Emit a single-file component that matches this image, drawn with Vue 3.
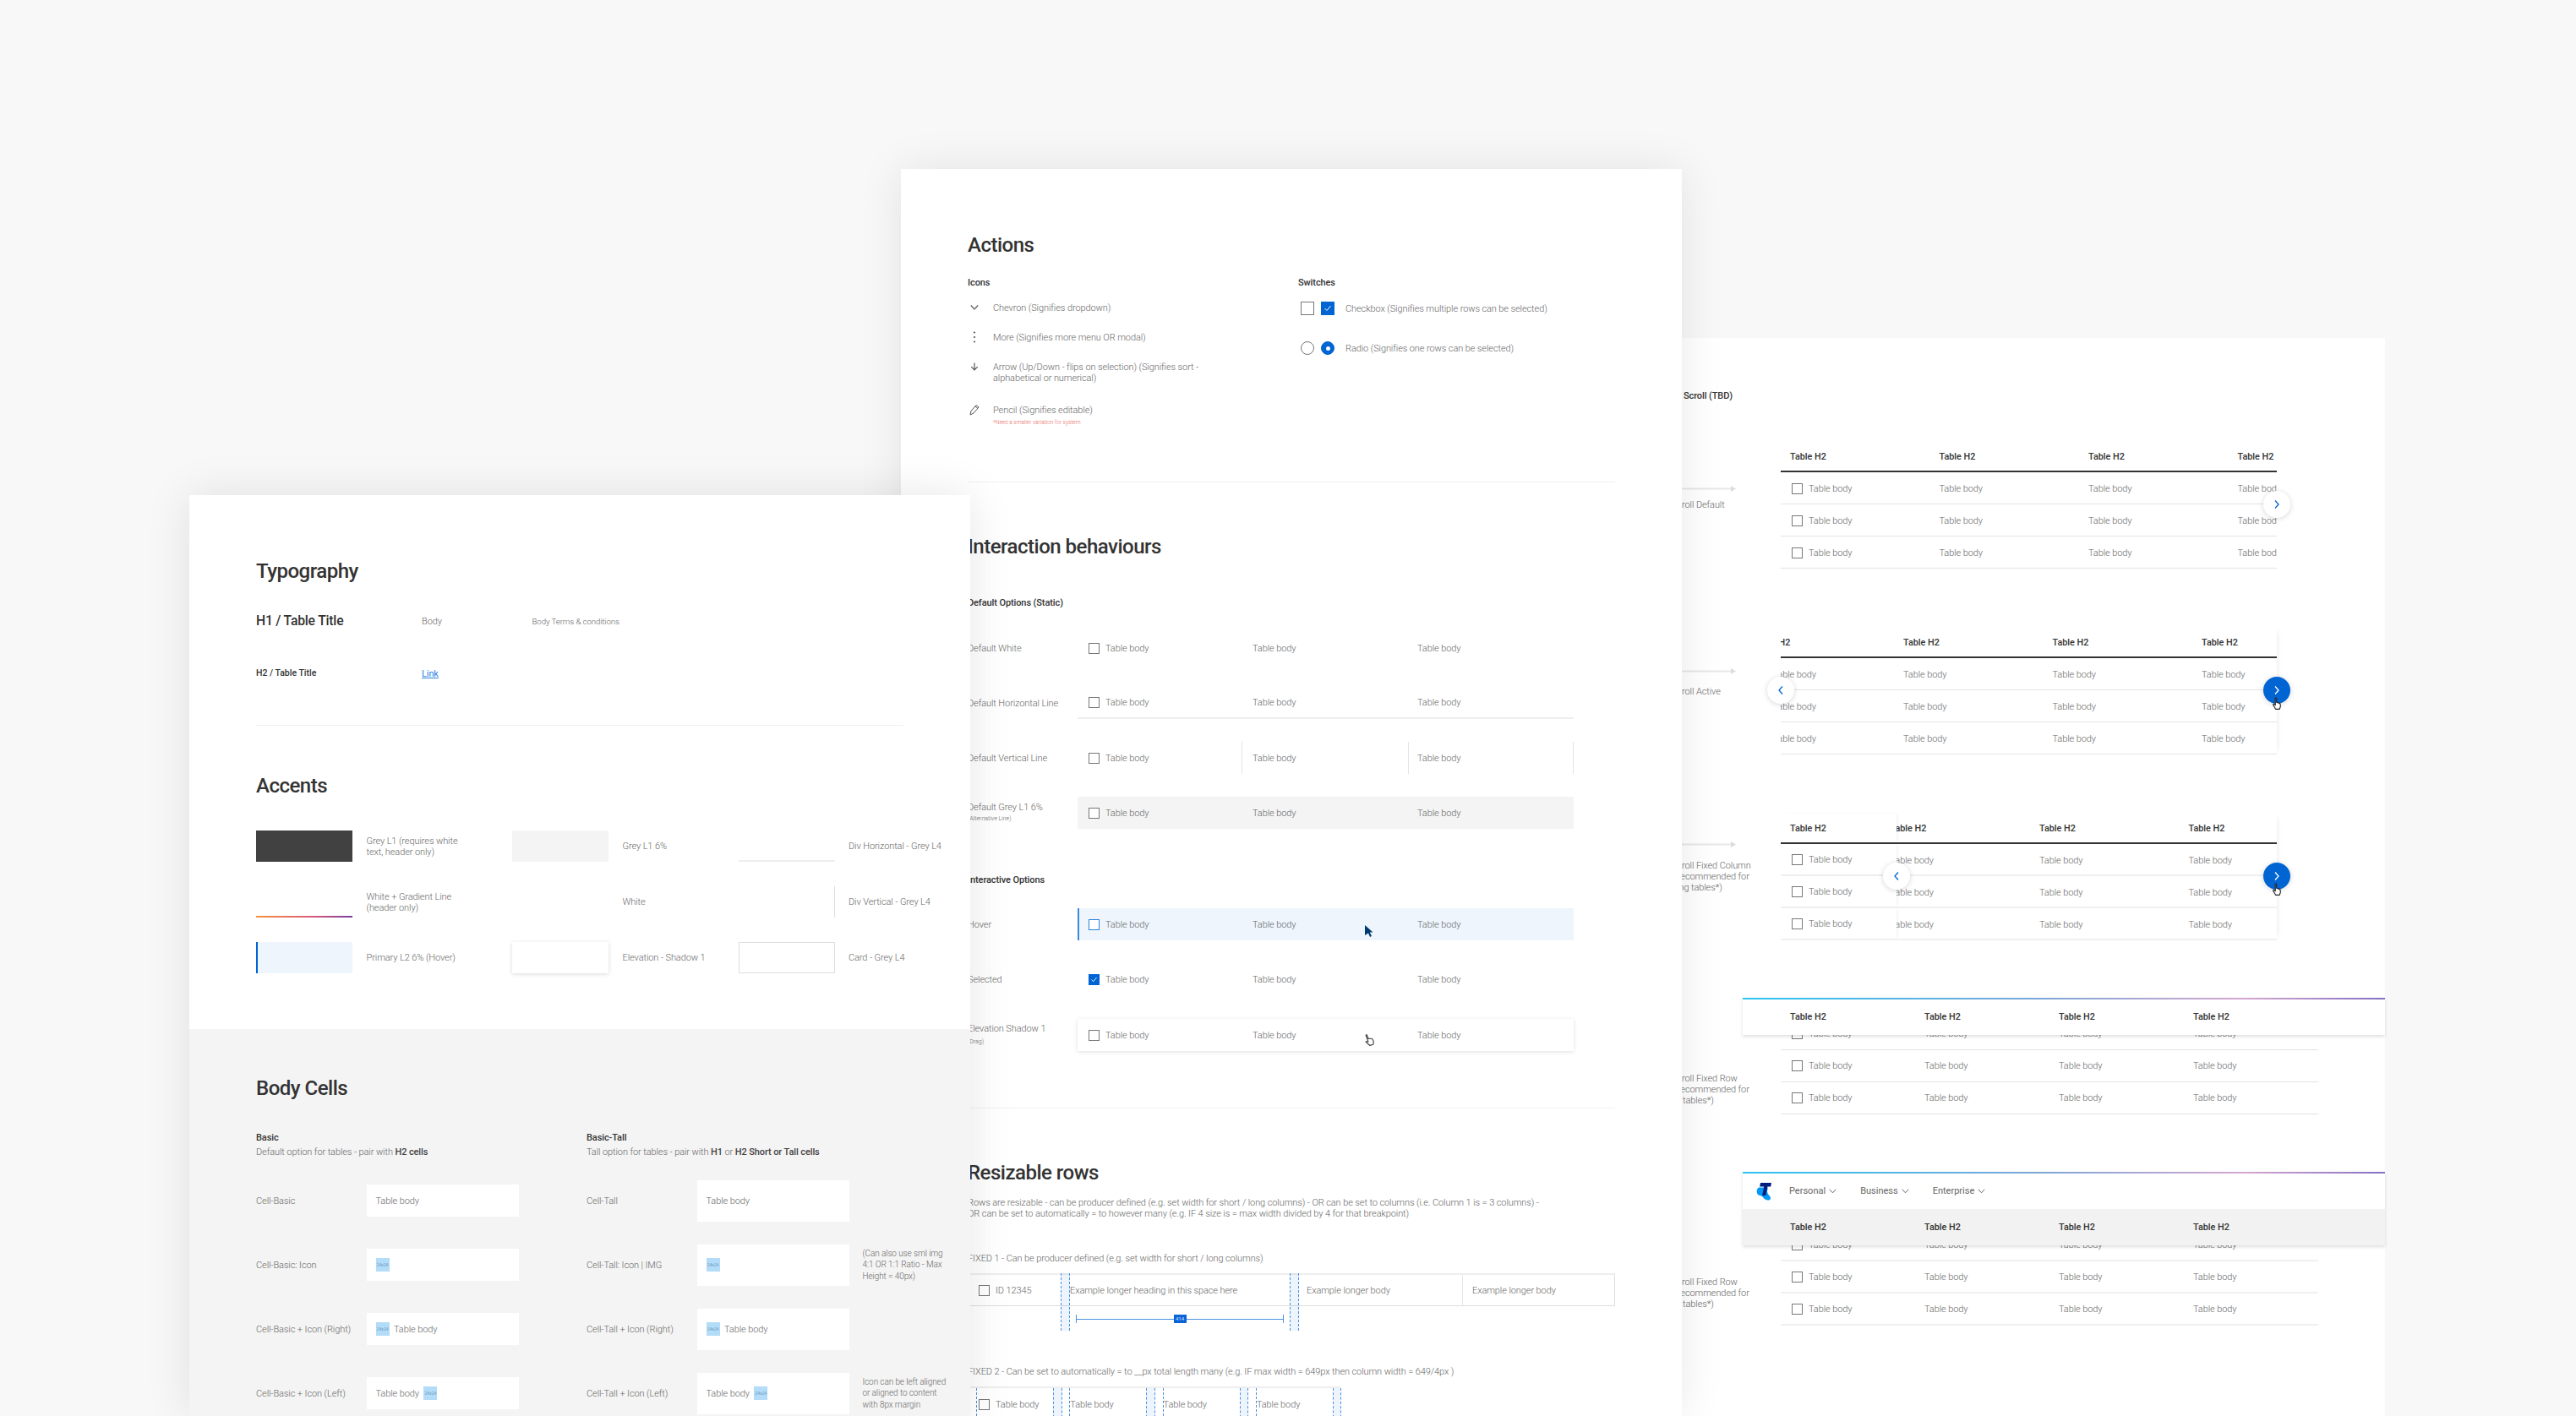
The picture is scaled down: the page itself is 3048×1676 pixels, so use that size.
<script setup>
const iconRows = [
  { icon: 'chevron', lines: ['Chevron (Signifies dropdown)'] },
  { icon: 'more', lines: ['More (Signifies more menu OR modal)'] },
  { icon: 'arrow', lines: ['Arrow (Up/Down - flips on selection) (Signifies sort -', 'alphabetical or numerical)'] },
  { icon: 'pencil', lines: ['Pencil (Signifies editable)'], note: '*Need a smaller variation for system' },
]
const staticRows = [
  { label: 'Default White', cls: '' },
  { label: 'Default Horizontal Line', cls: 'hline' },
  { label: 'Default Vertical Line', cls: 'vline' },
  { label: 'Default Grey L1 6%', sub: '(Alternative Line)', cls: 'grey' },
]
const interactiveRows = [
  { label: 'Hover', cls: 'hover', cursor: 'arrow' },
  { label: 'Selected', cls: 'selected', checked: true },
  { label: 'Elevation Shadow 1', sub: '(Drag)', cls: 'elev', cursor: 'hand' },
]
const swatches = [
  { cls: 'sw-dark', lines: ['Grey L1 (requires white', 'text, header only)'] },
  { cls: 'sw-grey', lines: ['Grey L1 6%'] },
  { cls: 'sw-divh', lines: ['Div Horizontal - Grey L4'] },
  { cls: 'sw-grad', lines: ['White + Gradient Line', '(header only)'] },
  { cls: 'sw-white', lines: ['White'] },
  { cls: 'sw-divv', lines: ['Div Vertical - Grey L4'] },
  { cls: 'sw-hover', lines: ['Primary L2 6% (Hover)'] },
  { cls: 'sw-shadow', lines: ['Elevation - Shadow 1'] },
  { cls: 'sw-card', lines: ['Card - Grey L4'] },
]
const cellRows = [
  { label: 'Cell-Basic', parts: ['text'], tall: false },
  { label: 'Cell-Tall', parts: ['text'], tall: true },
  { label: 'Cell-Basic: Icon', parts: ['chip'], tall: false },
  { label: 'Cell-Tall: Icon | IMG', parts: ['chip'], tall: true, note: ['(Can also use sml img', '4:1 OR 1:1 Ratio - Max', 'Height = 40px)'] },
  { label: 'Cell-Basic + Icon (Right)', parts: ['chip', 'text'], tall: false },
  { label: 'Cell-Tall + Icon (Right)', parts: ['chip', 'text'], tall: true },
  { label: 'Cell-Basic + Icon (Left)', parts: ['text', 'chip'], tall: false },
  { label: 'Cell-Tall + Icon (Left)', parts: ['text', 'chip'], tall: true, note: ['Icon can be left aligned', 'or aligned to content', 'with 8px margin'] },
]
const scrollTables = [
  { id: 't1', label: ['Scroll Default'], cols: 4, firstCheck: true, fixed: false, left: false, active: false },
  { id: 't2', label: ['Scroll Active'], cols: 4, firstCheck: true, fixed: false, left: true, active: true },
  { id: 't3', label: ['Scroll Fixed Column', '(Recommended for', 'long tables*)'], cols: 3, firstCheck: false, fixed: true, left: true, active: true },
]
const fixedBlocks = [
  { id: 'f1', nav: false, thick: false },
  { id: 'f2', nav: true, thick: true },
]
const navItems = ['Personal', 'Business', 'Enterprise']
const autoCols = [0, 1, 2, 3]
</script>

<template>
  <div class="canvas">
    <!-- right board -->
    <section class="board board-c">
      <h4 class="sub-h scroll-title">Scroll (TBD)</h4>
      <div v-for="t in scrollTables" :key="t.id" class="stable-row" :class="t.id">
        <div class="s-label">
          <svg class="flow-arrow" width="76" height="7" viewBox="0 0 76 7"><path d="M0 3.5H70" stroke="#e8e8e8" stroke-width="2" /><path d="M70 0l6 3.500-6 3.500z" fill="#dcdcdc" /></svg>
          <p v-for="l in t.label" :key="l" class="txt">{{ l }}</p>
        </div>
        <div class="stable">
          <div class="srow shead">
            <div v-if="t.fixed" class="fixed-cell"><span class="th">Table H2</span></div>
            <div class="scroller">
              <div class="track">
                <div v-for="c in t.cols" :key="c" class="tcol"><span class="th">Table H2</span></div>
              </div>
            </div>
          </div>
          <div v-for="r in 3" :key="r" class="srow sbody" :class="{ thick: t.fixed }">
            <div v-if="t.fixed" class="fixed-cell check-cell"><i class="cb"></i><span class="txt">Table body</span></div>
            <div class="scroller">
              <div class="track">
                <div v-for="c in t.cols" :key="c" class="tcol" :class="{ 'check-cell': t.firstCheck && c === 1 }">
                  <i v-if="t.firstCheck && c === 1" class="cb"></i><span class="txt">Table body</span>
                </div>
              </div>
            </div>
          </div>
          <span v-if="t.left" class="round round-left">
            <svg width="8" height="12" viewBox="0 0 8 12"><path d="M6 1.500L2 6l4 4.500" fill="none" stroke="#0064d2" stroke-width="1.300" /></svg>
          </span>
          <span class="round round-right" :class="{ active: t.active }">
            <svg width="8" height="12" viewBox="0 0 8 12"><path d="M2 1.500L6 6l-4 4.500" fill="none" :stroke="t.active ? '#fff' : '#0064d2'" stroke-width="1.300" /></svg>
          </span>
          <svg v-if="t.active" class="hand hand-scroll" width="12" height="16" viewBox="0 0 14 18"><path d="M5 1.500c0-.8 1.600-.8 1.600 0V7l3.400 1c1.500.5 2 1 2 2.500V13l-1.500 3.500h-5L2 10.500c-.5-1 .8-1.500 1.500-.7L5 11z" fill="#fff" stroke="#222" stroke-width="1.300" stroke-linejoin="round" /></svg>
        </div>
      </div>

      <div v-for="f in fixedBlocks" :key="f.id" class="fblock" :class="f.id">
        <div class="fhead">
          <div v-if="f.nav" class="fnav">
            <svg class="logo" width="18" height="21" viewBox="0 0 18 21">
              <path d="M3 5.500C.5 7 0 11 1.500 13.200 3 15.500 6 14.500 7.500 16.500c1.500 2 4 4.500 7.500 4 2-.3 2.500-2.500 1.500-4-1-1.500-3-3-3.500-6l.8-5z" fill="#0099f8" />
              <path d="M5 0h13l-.8 4.600H13.300l-2 10.400H7.100L9.200 4.600H4.200z" fill="#001e82" />
            </svg>
            <span v-for="n in navItems" :key="n" class="nav-item">{{ n }}
              <svg width="9" height="6" viewBox="0 0 9 6"><path d="M.8.800L4.500 4.800 8.200.800" fill="none" stroke="#666" stroke-width="1" /></svg>
            </span>
          </div>
          <div class="fcols" :class="{ greyhead: f.nav }">
            <div v-for="c in 4" :key="c" class="fcol"><span class="th">Table H2</span></div>
          </div>
        </div>
        <div class="fbody">
          <div class="s-label f-label">
            <p class="txt">Scroll Fixed Row</p>
            <p class="txt">(Recommended for</p>
            <p class="txt">all tables*)</p>
          </div>
          <div class="frows">
            <div v-for="r in 3" :key="r" class="frow" :class="{ thick: f.thick }">
              <div v-for="c in 4" :key="c" class="fcol" :class="{ 'check-cell': c === 1 }">
                <i v-if="c === 1" class="cb"></i><span class="txt">Table body</span>
              </div>
            </div>
          </div>
        </div>
      </div>
    </section>

    <!-- middle board -->
    <section class="board board-b">
      <div class="b-sec b-sec1">
        <h2 class="title">Actions</h2>
        <div class="two-col">
          <div>
            <h4 class="sub-h">Icons</h4>
            <div class="icon-list">
              <div v-for="r in iconRows" :key="r.icon" class="icon-row" :class="r.icon">
                <span class="ico">
                  <svg v-if="r.icon === 'chevron'" width="12" height="8" viewBox="0 0 12 8"><path d="M1.800 1.500L6 6l4.200-4.500" fill="none" stroke="#555" stroke-width="1.100" /></svg>
                  <svg v-else-if="r.icon === 'more'" width="4" height="14" viewBox="0 0 4 14"><circle cx="2" cy="1.500" r="1" fill="#444" /><circle cx="2" cy="7" r="1" fill="#444" /><circle cx="2" cy="12.500" r="1" fill="#444" /></svg>
                  <svg v-else-if="r.icon === 'arrow'" width="10" height="10" viewBox="0 0 10 10"><path d="M5 .5V9M1.300 5.200L5 9l3.700-3.800" fill="none" stroke="#555" stroke-width="1.200" /></svg>
                  <svg v-else width="12" height="14" viewBox="0 0 12 14"><path d="M1 13l1-4.500L8 1.500 11 4 5 11zM7 3l3 2.500" fill="none" stroke="#555" stroke-width="1" stroke-linejoin="round" /></svg>
                </span>
                <div>
                  <p v-for="l in r.lines" :key="l" class="txt">{{ l }}</p>
                  <p v-if="r.note" class="red-note">{{ r.note }}</p>
                </div>
              </div>
            </div>
          </div>
          <div>
            <h4 class="sub-h">Switches</h4>
            <div class="switch-list">
              <div class="switch-row">
                <i class="sw-box"></i>
                <i class="sw-box on"><svg width="10" height="8" viewBox="0 0 10 8"><path d="M1.500 4l2.500 2.500L8.500 1" fill="none" stroke="#fff" stroke-width="1" /></svg></i>
                <span class="txt sw-txt">Checkbox (Signifies multiple rows can be selected)</span>
              </div>
              <div class="switch-row">
                <i class="sw-box radio"></i>
                <i class="sw-box radio on"><b></b></i>
                <span class="txt sw-txt">Radio (Signifies one rows can be selected)</span>
              </div>
            </div>
          </div>
        </div>
      </div>

      <div class="b-sec b-sec2">
        <h2 class="title">Interaction behaviours</h2>
        <h4 class="sub-h opt-h">Default Options (Static)</h4>
        <div class="irows">
          <div v-for="r in staticRows" :key="r.label" class="irow">
            <div class="ilabel">
              <p class="txt">{{ r.label }}</p>
              <p v-if="r.sub" class="tiny">{{ r.sub }}</p>
            </div>
            <div class="icells" :class="r.cls">
              <div class="icell first"><i class="cb"></i><span class="txt">Table body</span></div>
              <div class="icell mid"><span class="txt">Table body</span></div>
              <div class="icell last"><span class="txt">Table body</span></div>
            </div>
          </div>
        </div>
        <h4 class="sub-h opt-h2">Interactive Options</h4>
        <div class="irows irows2">
          <div v-for="r in interactiveRows" :key="r.label" class="irow">
            <div class="ilabel">
              <p class="txt">{{ r.label }}</p>
              <p v-if="r.sub" class="tiny drag">{{ r.sub }}</p>
            </div>
            <div class="icells" :class="r.cls">
              <div class="icell first">
                <i class="cb" :class="{ blue: r.cls === 'hover', on: r.checked }">
                  <svg v-if="r.checked" width="9" height="7" viewBox="0 0 10 8"><path d="M1.500 4l2.500 2.500L8.500 1" fill="none" stroke="#fff" stroke-width="1" /></svg>
                </i>
                <span class="txt">Table body</span>
              </div>
              <div class="icell mid"><span class="txt">Table body</span></div>
              <div class="icell last"><span class="txt">Table body</span></div>
              <svg v-if="r.cursor === 'arrow'" class="pointer" width="10" height="14" viewBox="0 0 10 14"><path d="M0 0l9.500 8.500H5.800L8 13l-2 1-2-4.600L0 12z" fill="#003a70" /></svg>
              <svg v-if="r.cursor === 'hand'" class="hand hand-row" width="12" height="16" viewBox="0 0 14 18"><path d="M5 1.500c0-.8 1.600-.8 1.600 0V7l3.400 1c1.500.5 2 1 2 2.500V13l-1.500 3.500h-5L2 10.500c-.5-1 .8-1.500 1.500-.7L5 11z" fill="#fff" stroke="#333" stroke-width="1.200" stroke-linejoin="round" transform="rotate(-20 7 9)" /></svg>
            </div>
          </div>
        </div>
      </div>

      <div class="b-sec3">
        <h2 class="title">Resizable rows</h2>
        <p class="txt para">Rows are resizable - can be producer defined (e.g. set width for short / long columns) - OR can be set to columns (i.e. Column 1 is = 3 columns) -</p>
        <p class="txt">OR can be set to automatically = to however many (e.g. IF 4 size is = max width divided by 4 for that breakpoint)</p>
        <p class="txt fixed-cap">FIXED 1 - Can be producer defined (e.g. set width for short / long columns)</p>
        <div class="resize-wrap">
          <div class="rtable">
            <div class="rc rc1"><i class="cb"></i><span class="txt">ID 12345</span></div>
            <div class="rc rc2"><span class="txt">Example longer heading in this space here</span></div>
            <div class="rc rc3"><span class="txt">Example longer body</span></div>
            <div class="rc rc4"><span class="txt">Example longer body</span></div>
          </div>
          <div class="measure"><span class="measure-val">414</span></div>
          <i class="guide g1"></i>
          <i class="guide g2"></i>
        </div>
        <p class="txt fixed-cap2">FIXED 2 - Can be set to automatically = to __px total length many (e.g. IF max width = 649px then column width = 649/4px )</p>
        <div class="auto-table">
          <div v-for="c in autoCols" :key="c" class="auto-cell" :class="{ firstc: c === 0 }">
            <i v-if="c === 0" class="cb"></i><span class="txt">Table body</span>
            <i class="band"></i>
          </div>
        </div>
      </div>
    </section>

    <!-- left board -->
    <section class="board board-a">
      <div class="a-sec a-sec1">
        <h2 class="title">Typography</h2>
        <div class="type-grid">
          <span class="h1-sample">H1 / Table Title</span>
          <span class="txt">Body</span>
          <span class="txt terms">Body Terms &amp; conditions</span>
          <span class="h2-sample">H2 / Table Title</span>
          <a class="txt link">Link</a>
        </div>
      </div>
      <div class="a-sec a-sec2">
        <h2 class="title">Accents</h2>
        <div class="swatches">
          <div v-for="s in swatches" :key="s.cls" class="swatch-item">
            <i class="swatch" :class="s.cls"></i>
            <div class="swatch-label"><p v-for="l in s.lines" :key="l" class="txt">{{ l }}</p></div>
          </div>
        </div>
      </div>
      <div class="a-sec3">
        <h2 class="title">Body Cells</h2>
        <div class="cell-heads">
          <div>
            <h4 class="sub-h">Basic</h4>
            <p class="txt">Default option for tables - pair with <b>H2 cells</b></p>
          </div>
          <div>
            <h4 class="sub-h">Basic-Tall</h4>
            <p class="txt">Tall option for tables - pair with <b>H1</b> or <b>H2 Short or Tall cells</b></p>
          </div>
        </div>
        <div class="cell-grid">
          <div v-for="c in cellRows" :key="c.label" class="cell-item">
            <span class="txt cell-label">{{ c.label }}</span>
            <div class="cell-box" :class="{ tall: c.tall }">
              <template v-for="p in c.parts" :key="p">
                <span v-if="p === 'text'" class="txt">Table body</span>
                <span v-else class="chip">24x24</span>
              </template>
            </div>
            <div v-if="c.note" class="cell-note"><p v-for="l in c.note" :key="l" class="txt">{{ l }}</p></div>
          </div>
        </div>
      </div>
    </section>
  </div>
</template>

<style>
html, body { margin: 0; background: #f8f8f8; overflow: hidden; }
</style>

<style scoped>
* { box-sizing: border-box; }
p, h2, h4 { margin: 0; }
i { display: block; font-style: normal; }
.canvas { position: relative; width: 3048px; height: 1676px; overflow: hidden; background: #f8f8f8; font-family: Roboto, "Liberation Sans", sans-serif; color: #333; }
.board { position: absolute; background: #fff; }
.txt { font-size: 11px; line-height: 13px; font-weight: 300; color: #686868; white-space: nowrap; letter-spacing: -0.100px; }
.txt b { font-weight: 500; color: #444; }
.title { font-size: 24px; height: 30px; line-height: 32px; font-weight: 500; color: #333; letter-spacing: -0.500px; white-space: nowrap; }
.sub-h { font-size: 11px; height: 14px; line-height: 16px; font-weight: 500; color: #333; white-space: nowrap; letter-spacing: -0.100px; }
.th { font-size: 10.800px; line-height: 14px; font-weight: 500; color: #333; white-space: nowrap; }
.cb { flex: none; width: 13px; height: 13px; border: 1.500px solid #777; background: #fff; margin-right: 7px; display: flex; align-items: center; justify-content: center; }
.cb.blue { border-color: #2f80dc; }
.cb.on { background: #0064d2; border-color: #0064d2; }

/* board B */
.board-b { left: 1066px; top: 200px; width: 924px; height: 1476px; padding: 0 79px; z-index: 2; box-shadow: 0 0 50px rgba(0,0,0,.09); }
.b-sec { border-bottom: 1px solid #f1f1f1; }
.b-sec1 { height: 371px; padding-top: 74px; }
.two-col { display: grid; grid-template-columns: 391px 1fr; margin-top: 23px; }
.icon-list { margin-top: 16.500px; display: flex; flex-direction: column; gap: 22px; }
.icon-row { display: grid; grid-template-columns: 30px 1fr; }
.icon-row.pencil { margin-top: 3px; }
.ico { width: 16px; height: 13px; display: flex; align-items: center; justify-content: center; }
.red-note { font-size: 6.500px; line-height: 10px; margin-top: 3.500px; color: #e8655c; font-weight: 300; white-space: nowrap; }
.switch-list { margin-top: 16px; padding-left: 3px; display: flex; flex-direction: column; gap: 31px; }
.switch-row { display: flex; align-items: center; gap: 8px; height: 16px; }
.sw-box { width: 16px; height: 16px; border: 1.500px solid #777; display: flex; align-items: center; justify-content: center; }
.sw-box.on { background: #0064d2; border-color: #0064d2; }
.sw-box.radio { border-radius: 50%; }
.sw-box.radio b { width: 5px; height: 5px; background: #fff; border-radius: 50%; display: block; }
.sw-txt { margin-left: 5px; }

.b-sec2 { height: 741px; padding-top: 60px; }
.opt-h { margin-top: 45px; }
.opt-h2 { margin-top: 53px; }
.irows { margin-top: 28px; display: flex; flex-direction: column; gap: 27px; }
.irows2 { margin-top: 27px; gap: 27.500px; }
.irow { display: grid; grid-template-columns: 130px 587px; align-items: center; height: 38px; }
.ilabel { display: flex; flex-direction: column; }
.tiny { font-size: 7px; line-height: 12px; font-weight: 300; color: #666; margin-top: 1px; }
.tiny.drag { margin-top: 3px; }
.icells { position: relative; display: flex; height: 38px; }
.icell { display: flex; align-items: center; padding-left: 12px; }
.icell.first { width: 195px; padding-left: 13px; }
.icell.mid { width: 197px; }
.icell.last { width: 195px; padding-left: 10px; }
.hline { border-bottom: 2px solid #eee; }
.vline .icell { border-right: 1px solid #e4e4e4; }
.grey { background: #f4f4f4; }
.hover { background: #eef5fd; box-shadow: inset 2px 0 #3a8bdc; }
.elev { box-shadow: 0 1px 5px rgba(0,0,0,.12); }
.pointer { position: absolute; left: 340px; top: 20px; }
.hand-row { position: absolute; left: 339px; top: 17px; }

.b-sec3 { padding-top: 60px; }
.para { margin-top: 14.500px; }
.fixed-cap { margin-top: 40px; }
.fixed-cap2 { margin-top: 41.500px; }
.resize-wrap { position: relative; margin-top: 11.500px; height: 68px; }
.rtable { display: flex; height: 39px; border-top: 2px solid #eee; border-bottom: 1px solid #ddd; border-right: 1px solid #ddd; }
.rc { display: flex; align-items: center; }
.rc1 { width: 121px; padding-left: 13px; }
.rc2 { width: 269.500px; }
.rc3 { width: 195.500px; padding-left: 10.500px; border-right: 1px solid #e6e6e6; }
.rc4 { flex: 1; padding-left: 11px; }
.measure { position: relative; margin: 10px 0 0 128px; width: 246px; height: 10px; border-left: 1px solid #4a90e2; border-right: 1px solid #4a90e2; display: flex; align-items: center; justify-content: center; }
.measure::before { content: ""; position: absolute; left: 0; right: 0; top: 4.500px; height: 1px; background: #4a90e2; }
.measure-val { position: relative; width: 15px; height: 10px; background: #0a64d6; color: #cfe3fb; font-size: 6px; line-height: 10px; text-align: center; }
.guide { position: absolute; top: 0; bottom: 0; border-left: 1px dashed #4a90e2; border-right: 1px dashed #4a90e2; background: rgba(0,100,210,.07); }
.g1 { left: 110px; width: 11px; }
.g2 { left: 381px; width: 10.500px; }
.auto-table { margin-top: 11.500px; padding-left: 10px; display: flex; width: 441px; height: 40px; border-top: 2px solid #eee; }
.auto-cell { position: relative; flex: none; width: 110.300px; display: flex; align-items: center; border-left: 1px dashed #4a90e2; }
.auto-cell.firstc { padding-left: 2px; }
.band { position: absolute; left: 90px; top: 0; width: 10.500px; height: 40px; border-left: 1px dashed #4a90e2; border-right: 1px dashed #4a90e2; background: rgba(0,100,210,.07); }

/* board A */
.board-a { left: 224px; top: 586px; width: 924px; height: 1090px; z-index: 3; box-shadow: 0 0 50px rgba(0,0,0,.1); }
.a-sec { margin: 0 79px; border-bottom: 1px solid #f0f0f0; }
.a-sec1 { height: 273px; padding-top: 74px; }
.type-grid { display: grid; grid-template-columns: 196px 130.500px 1fr; grid-template-rows: 20px 14px; row-gap: 45px; margin-top: 35px; align-items: center; }
.h1-sample { font-size: 15.700px; line-height: 20px; font-weight: 500; color: #333; white-space: nowrap; letter-spacing: -.200px; }
.h2-sample { font-size: 10.500px; line-height: 14px; font-weight: 500; color: #333; white-space: nowrap; }
.terms { font-size: 9.700px; }
.link { color: #2a7fe0; text-decoration: underline; font-weight: 400; }
.a-sec2 { height: 360px; padding-top: 55px; }
.swatches { display: grid; grid-template-columns: 303px 267.500px 1fr; grid-auto-rows: 37px; row-gap: 29px; margin-top: 39px; }
.swatch-item { display: flex; align-items: center; gap: 16.500px; }
.swatch { flex: none; width: 114px; height: 37px; }
.sw-dark { background: #414141; }
.sw-grey { background: #f4f4f4; }
.sw-divh { border-bottom: 2px solid #eee; }
.sw-grad { background: linear-gradient(90deg, #f5923e, #dc5f78 55%, #7a3c9e) bottom / 100% 2px no-repeat; }
.sw-white { background: #fff; }
.sw-divv { border-right: 1px solid #ddd; }
.sw-hover { background: #eef5fd; border-left: 2px solid #0064d2; }
.sw-shadow { background: #fff; box-shadow: 0 1px 5px rgba(0,0,0,.15); }
.sw-card { background: #fff; border: 1px solid #ddd; }
.a-sec3 { background: #f4f4f4; padding: 54px 79px 0; height: 458px; margin-top: -1px; }
.cell-heads { display: grid; grid-template-columns: 391px 1fr; margin-top: 37px; }
.cell-heads .txt { margin-top: 3.500px; }
.cell-grid { display: grid; grid-template-columns: 391px 1fr; grid-auto-rows: 49px; row-gap: 27px; margin-top: 27px; }
.cell-item { display: flex; align-items: center; }
.cell-label { width: 130.500px; flex: none; }
.cell-box { width: 180px; height: 38px; background: #fff; padding-left: 11px; display: flex; align-items: center; gap: 5.500px; flex: none; }
.cell-box.tall { height: 49px; }
.chip { width: 16px; height: 16px; background: #b3dcf9; color: #6c9dbf; font-size: 5px; line-height: 16px; text-align: center; flex: none; }
.cell-note { margin-left: 16px; }
.cell-note .txt { font-size: 10px; line-height: 13.500px; }

/* board C */
.board-c { left: 1978px; top: 400px; width: 844px; height: 1276px; padding-top: 61px; z-index: 1; }
.scroll-title { margin-left: 14px; margin-bottom: 48px; }
.stable-row { display: flex; margin-bottom: 70px; }
.stable-row.t3 { margin-bottom: 68px; }
.s-label { width: 129px; flex: none; display: flex; flex-direction: column; }
.flow-arrow { flex: none; }
.t1 .s-label { padding-top: 51.500px; }
.t1 .flow-arrow { margin-bottom: 9px; }
.t2 .s-label { padding-top: 47.500px; }
.t2 .flow-arrow { margin-bottom: 14px; }
.t3 .s-label { padding-top: 32.500px; }
.t3 .flow-arrow { margin-bottom: 15px; }
.stable { position: relative; width: 587px; flex: none; }
.t2 .stable, .t3 .stable { box-shadow: 5px 0 6px -5px rgba(0,0,0,.1); }
.srow { display: flex; }
.shead { height: 36px; border-bottom: 2px solid #333; }
.sbody { height: 38px; border-bottom: 1px solid #e3e3e3; }
.sbody.thick { border-bottom: 2px solid #f0f0f0; }
.scroller { flex: 1; min-width: 0; overflow: hidden; }
.track { display: flex; }
.t2 .track { margin-left: -42.500px; }
.t3 .track { margin-left: -18.500px; }
.tcol { flex: none; width: 176.500px; height: 37px; padding: 1px 0 0 11px; display: flex; align-items: center; }
.shead .tcol { height: 34px; padding-top: 2px; }
.fixed-cell { position: relative; z-index: 1; flex: none; width: 137px; padding: 1px 0 0 11px; display: flex; align-items: center; box-shadow: 2px 0 3px -1px rgba(0,0,0,.07); background: #fff; }
.check-cell { padding-left: 13px; }
.round { position: absolute; top: 58px; width: 32px; height: 32px; border-radius: 50%; background: #fff; box-shadow: 0 1px 6px rgba(0,0,0,.16); display: flex; align-items: center; justify-content: center; z-index: 2; }
.round-right { right: -16px; }
.round-right.active { background: #0064d2; }
.round-left { left: -16px; }
.t3 .round-left { left: 120.500px; }
.hand-scroll { position: absolute; right: -6px; top: 82px; z-index: 3; }
.fblock { margin-bottom: 68px; }
.fhead { position: relative; z-index: 2; margin-left: 84px; width: 760px; background: linear-gradient(90deg, #2cc5f2, #7aa7d8 45%, #d7a7d0 78%, #8470c4) 0 0 / 100% 2px no-repeat #fff; box-shadow: 0 2px 4px rgba(0,0,0,.13); }
.fcols { display: flex; height: 44px; padding: 2px 0 0 45px; align-items: center; }
.fcols.greyhead { height: 43px; padding-top: 0; background: #f2f2f2; }
.fcol { flex: none; width: 159px; padding-left: 11px; display: flex; align-items: center; }
.check-cell.fcol { padding-left: 13px; }
.fnav { height: 44px; padding: 2px 0 0 16px; display: flex; align-items: center; gap: 21px; }
.nav-item { display: flex; align-items: center; gap: 4px; font-size: 11px; line-height: 14px; font-weight: 400; color: #666; margin-right: 7px; white-space: nowrap; }
.logo { flex: none; }
.fbody { display: flex; }
.f1 .f-label { padding-top: 44.500px; }
.f2 .f-label { padding-top: 36.500px; }
.frows { width: 636px; margin-top: -20px; }
.f2 .frows { margin-top: -19px; }
.frow { display: flex; height: 38px; border-bottom: 1px solid #e3e3e3; }
.frow.thick { border-bottom: 2px solid #f0f0f0; }
</style>
